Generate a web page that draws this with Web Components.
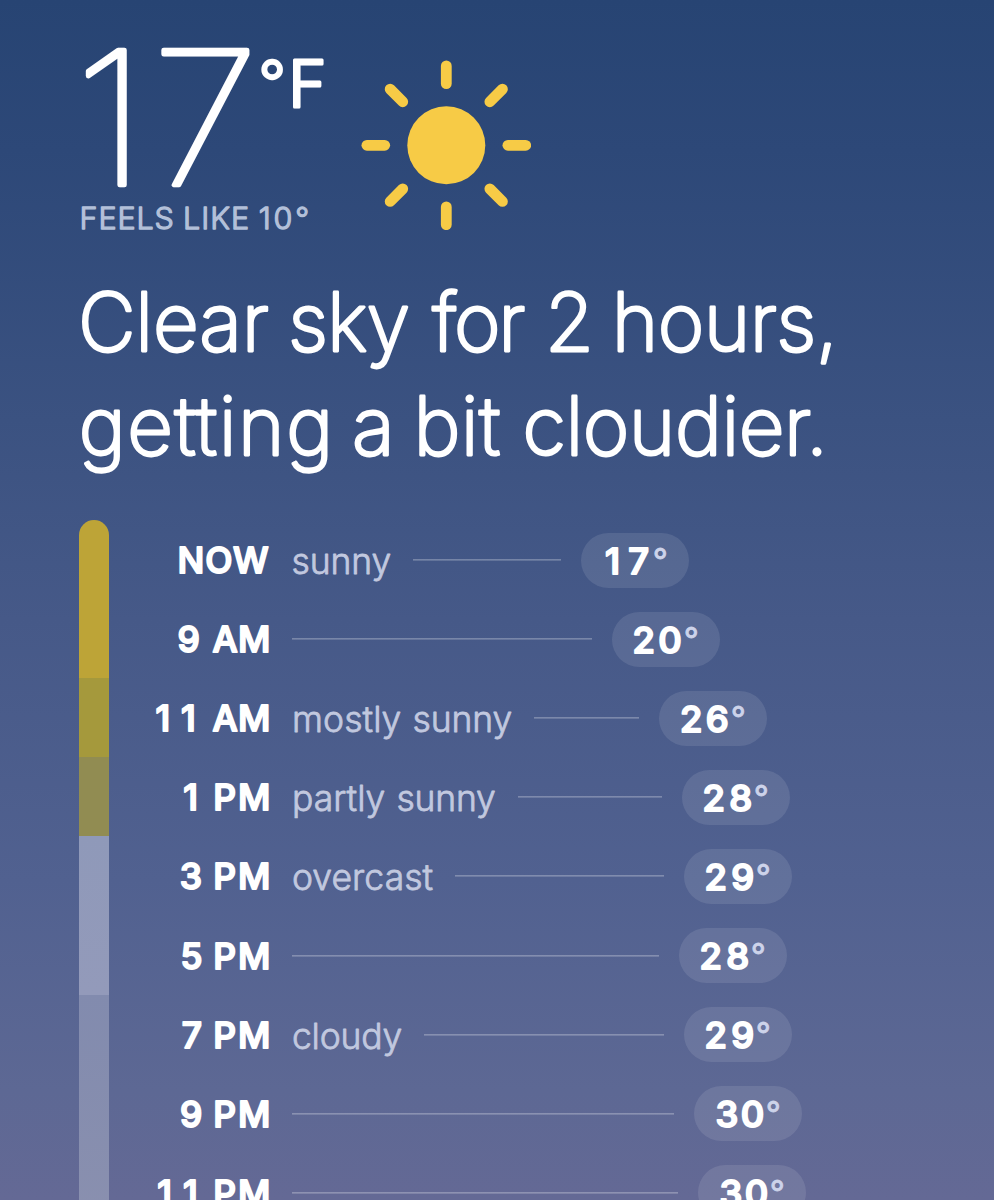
<!DOCTYPE html>
<html lang="en">
<head>
<meta charset="utf-8">
<title>Weather</title>
<style>
  body {
    margin: 0;
    background: #284575;
    font-family: Inter, "Liberation Sans", sans-serif;
  }
</style>
</head>
<body>
<weather-app>
  <current-weather slot="current"></current-weather>
  <weather-summary slot="summary"></weather-summary>
  <weather-timeline slot="timeline">
    <condition-bar slot="bar"></condition-bar>
    <hour-row time="NOW" time-fit="28.5-119" sky="sunny" sky-fit="1-99" temp="17" temp-fit="24-68" offset="581"></hour-row>
    <hour-row time="9 AM" time-fit="27.5-49.7 61.5-119" temp="20" temp-fit="21.5-69" offset="611.5"></hour-row>
    <hour-row time="11 AM" time-fit="5.5-44 61.5-119" sky="mostly sunny" sky-fit="1.7-109 122-220" temp="26" temp-fit="22-69.5" offset="659"></hour-row>
    <hour-row time="1 PM" time-fit="33-46.5 64.3-119" sky="partly sunny" sky-fit="1.7-93 106-203.5" temp="28" temp-fit="21.5-70" offset="681.5"></hour-row>
    <hour-row time="3 PM" time-fit="31-51.7 64.3-119" sky="overcast" sky-fit="0.5-141" temp="29" temp-fit="21.5-70" offset="683.5"></hour-row>
    <hour-row time="5 PM" time-fit="31-52 64.3-119" temp="28" temp-fit="21.5-70" offset="678.5"></hour-row>
    <hour-row time="7 PM" time-fit="31.5-52 64.3-119" sky="cloudy" sky-fit="0.5-110" temp="29" temp-fit="21.5-70" offset="684"></hour-row>
    <hour-row time="9 PM" time-fit="30-52 64.3-119" temp="30" temp-fit="21.5-69.5" offset="694"></hour-row>
    <hour-row time="11 PM" time-fit="7.3-46 64.3-119" temp="30" temp-fit="21.5-69.5" offset="698"></hour-row>
  </weather-timeline>
</weather-app>

<script>
const ctx = document.createElement("canvas").getContext("2d");

// Text with soft, rounded stroke ends. "fit" holds one left-right pair per
// word, in px from the left of the box; letters are spaced to fill it.
// "stretch" widens or narrows the letters themselves.
class RoundText extends HTMLElement {
  connectedCallback() {
    if (this.shadowRoot) return;
    const num = (name, fallback) => parseFloat(this.getAttribute(name) || fallback);
    const size = num("size", 36);
    const weight = num("weight", 400);
    const stroke = num("stroke", 1);
    const stretch = num("stretch", 1);
    const words = this.getAttribute("text").split(" ");
    const fits = this.getAttribute("fit").split(" ");

    ctx.font = `${weight} ${size}px Inter, "Liberation Sans", sans-serif`;
    const spans = words.map((word, i) => {
      const [left, right] = fits[i].split("-").map(n => Number(n) / stretch);
      const m = ctx.measureText(word);
      const ink = m.actualBoundingBoxLeft + m.actualBoundingBoxRight + stroke;
      const spacing = word.length > 1 ? (right - left - ink) / (word.length - 1) : 0;
      let x = left + m.actualBoundingBoxLeft + stroke / 2;
      if (word.length === 1) x += (right - left - ink) / 2;
      return `<tspan x="${x.toFixed(2)}" letter-spacing="${spacing.toFixed(3)}">${word}</tspan>`;
    });

    this.attachShadow({ mode: "open" }).innerHTML = `
      <style>
        :host { display: block; flex: none; }
        svg { display: block; overflow: visible; }
        text {
          font: ${weight} ${size}px Inter, "Liberation Sans", sans-serif;
          fill: currentColor;
          stroke: currentColor;
          stroke-width: ${stroke}px;
          stroke-linejoin: round;
          stroke-linecap: round;
        }
      </style>
      <svg width="${num("width", 100)}" height="${num("height", 54)}">
        <text y="${num("baseline", 40)}" transform="scale(${stretch} 1)">${spans.join(" ")}</text>
      </svg>`;
  }
}

class SunIcon extends HTMLElement {
  connectedCallback() {
    const rays = [0, 45, 90, 135, 180, 225, 270, 315]
      .map(a => `<line x1="0" y1="-79.4" x2="0" y2="-61.6" transform="rotate(${a})"/>`).join("");
    this.attachShadow({ mode: "open" }).innerHTML = `
      <style>
        :host { display: block; width: 170px; height: 170px; }
        svg { display: block; }
        circle { fill: #f7cb46; }
        line { stroke: #f7cb46; stroke-width: 10.8; stroke-linecap: round; }
      </style>
      <svg width="170" height="170" viewBox="-85.3 -85.3 170 170">
        <circle r="39"/>${rays}
      </svg>`;
  }
}

class CurrentWeather extends HTMLElement {
  connectedCallback() {
    this.attachShadow({ mode: "open" }).innerHTML = `
      <style>
        :host { display: flex; height: 240px; color: #fff; }
        .reading { width: 282px; }
        .temp { display: flex; height: 193px; }
        .feels { color: #b3c0d9; }
        sun-icon { margin-top: 60px; }
      </style>
      <div class="reading">
        <div class="temp">
          <round-text text="17" size="186" weight="100" stroke="4.6" stretch="1.06" width="178" height="193" baseline="185.5" fit="6.5-171.5"></round-text>
          <round-text text="°" size="60" weight="300" stroke="2.5" width="34" height="120" baseline="104" fit="4-27"></round-text>
          <round-text text="F" size="65" weight="300" stroke="3" width="40" height="120" baseline="107.4" fit="1.5-33"></round-text>
        </div>
        <div class="feels">
          <round-text text="FEELS LIKE 10°" size="29.6" weight="300" stroke="1.3" stretch="1.03" width="240" height="45" baseline="35.7" fit="2-93.7 105.3-169.3 180-229.3"></round-text>
        </div>
      </div>
      <sun-icon></sun-icon>`;
  }
}

class WeatherSummary extends HTMLElement {
  connectedCallback() {
    this.attachShadow({ mode: "open" }).innerHTML = `
      <style>
        :host { display: block; padding-top: 30px; height: 250px; color: #fff; }
      </style>
      <round-text text="Clear sky for 2 hours," size="81" weight="200" stroke="2.8" stretch="0.98" width="800" height="104" baseline="81" fit="2.5-189.5 212.5-330 352-446 470.7-511.3 538.3-752"></round-text>
      <round-text text="getting a bit cloudier." size="81" weight="200" stroke="2.8" stretch="0.98" width="800" height="104" baseline="81" fit="2.3-248.7 275.3-311 340-422 446-743"></round-text>`;
  }
}

class WeatherTimeline extends HTMLElement {
  connectedCallback() {
    this.attachShadow({ mode: "open" }).innerHTML = `
      <style>
        :host { display: flex; gap: 41px; }
        .hours { flex: 1; padding-top: 0.5px; }
      </style>
      <slot name="bar"></slot>
      <div class="hours"><slot></slot></div>`;
  }
}

class ConditionBar extends HTMLElement {
  connectedCallback() {
    this.attachShadow({ mode: "open" }).innerHTML = `
      <style>
        :host {
          display: grid;
          grid-template-rows: 2fr 1fr 1fr 2fr 3fr;
          width: 30px;
          height: 711.9px;
          border-radius: 15px 15px 0 0;
          overflow: hidden;
        }
        .sunny { background: #bda437; }
        .mostly { background: #a5993c; }
        .partly { background: #918c52; }
        .overcast { background: linear-gradient(#8f99b9, #939aba); }
        .cloudy { background: linear-gradient(#828bae, #8a90af); }
      </style>
      <div class="sunny"></div>
      <div class="mostly"></div>
      <div class="partly"></div>
      <div class="overcast"></div>
      <div class="cloudy"></div>`;
  }
}

class HourRow extends HTMLElement {
  connectedCallback() {
    const get = name => this.getAttribute(name);
    const sky = get("sky");
    const skyWidth = sky ? get("sky-fit").split("-").pop() : 0;
    // the hours column starts 150px from the left of the page
    const pillRight = parseFloat(get("offset")) + 108 - 150;
    this.attachShadow({ mode: "open" }).innerHTML = `
      <style>
        :host {
          display: flex;
          align-items: center;
          width: ${pillRight}px;
          height: 79.1px;
          color: #fff;
        }
        .time { width: 142px; flex: none; }
        .sky { color: #c1c8df; margin-right: 22px; }
        .line {
          flex: 1;
          height: 2px;
          margin-right: 20px;
          background: linear-gradient(rgba(255, 255, 255, 0.32), rgba(255, 255, 255, 0.12));
        }
        .pill {
          display: flex;
          flex: none;
          width: 108px;
          height: 55px;
          border-radius: 27.5px;
          background: rgba(255, 255, 255, 0.1);
        }
        .degree { color: #cdd3ea; }
      </style>
      <div class="time">
        <round-text text="${get("time")}" size="35.5" weight="500" stroke="1.9" width="120" height="54" baseline="40.2" fit="${get("time-fit")}"></round-text>
      </div>
      ${sky ? `<round-text class="sky" text="${sky}" size="35.5" weight="300" stroke="0.8" width="${skyWidth}" height="54" baseline="40.6" fit="${get("sky-fit")}"></round-text>` : ""}
      <div class="line"></div>
      <div class="pill">
        <round-text text="${get("temp")}" size="35" weight="500" stroke="1.9" stretch="1.04" width="72" height="54" baseline="40.6" fit="${get("temp-fit")}"></round-text>
        <round-text class="degree" text="°" size="33" weight="400" stroke="0.8" width="36" height="54" baseline="38.8" fit="1.3-13.3"></round-text>
      </div>`;
  }
}

class WeatherApp extends HTMLElement {
  connectedCallback() {
    this.attachShadow({ mode: "open" }).innerHTML = `
      <style>
        :host {
          display: block;
          box-sizing: border-box;
          height: 1200px;
          padding-left: 79px;
          overflow: hidden;
          background: linear-gradient(#274473 0, #2d4878 150px, #3b5281 420px, #465988 620px, #516190 880px, #5d6894 1090px, #646995 1200px);
        }
      </style>
      <slot name="current"></slot>
      <slot name="summary"></slot>
      <slot name="timeline"></slot>`;
  }
}

customElements.define("round-text", RoundText);
customElements.define("sun-icon", SunIcon);
customElements.define("current-weather", CurrentWeather);
customElements.define("weather-summary", WeatherSummary);
customElements.define("weather-timeline", WeatherTimeline);
customElements.define("condition-bar", ConditionBar);
customElements.define("hour-row", HourRow);
customElements.define("weather-app", WeatherApp);
</script>
</body>
</html>
